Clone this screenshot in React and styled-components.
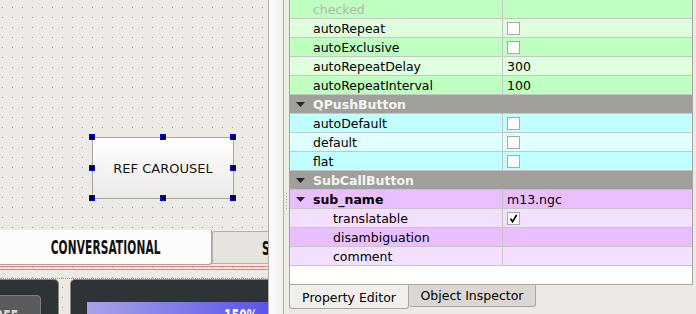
import React from 'react';
import styled, { createGlobalStyle } from 'styled-components';

const Global = createGlobalStyle`
  html, body { margin: 0; padding: 0; background: #edeae6; }
  body { font-family: "DejaVu Sans", "Noto Sans", sans-serif; font-size: 12.5px; color: #000; }
  * { box-sizing: border-box; }
`;

const dotSvg = encodeURIComponent(
  "<svg xmlns='http://www.w3.org/2000/svg' width='10' height='10'><rect x='2' y='7' width='1' height='1' fill='#9f9c98'/></svg>"
);

const Window = styled.div`
  display: flex;
  width: 696px;
  height: 314px;
  overflow: hidden;
  background: #edeae6;
`;

/* ---------- left: designer form ---------- */
const FormArea = styled.div`
  width: 269px;
  flex: none;
  border-right: 1px solid #b3afaa;
  display: flex;
  flex-direction: column;
  background-color: #edeae6;
  background-image: url("data:image/svg+xml,${dotSvg}");
  overflow: hidden;
`;

const Canvas = styled.div`
  position: relative;
  height: 230px;
  flex: none;
`;

const SelectedButton = styled.div`
  position: absolute;
  left: 92px;
  top: 137px;
  width: 142px;
  height: 62px;
  border: 1px solid #a9a6a2;
  background: linear-gradient(#ffffff, #ebe9e6);
  display: flex;
  align-items: center;
  justify-content: center;
  font-size: 13px;
  color: #151515;
`;

const Handle = styled.span`
  position: absolute;
  width: 6px;
  height: 6px;
  background: #000;
  border: 1px solid #0000ff;
  left: ${(p) => p.$x};
  top: ${(p) => p.$y};
`;

const TabBar = styled.div`
  display: flex;
  height: 35px;
  flex: none;
  align-items: flex-start;
`;

const FormTab = styled.div`
  display: flex;
  align-items: center;
  overflow: hidden;
  ${(p) =>
    p.$active
      ? `width: 212px; height: 35px; justify-content: center; background: #fdfcfb;
         border-right: 1px solid #aaa6a1; border-bottom: 1px solid #aaa6a1; border-bottom-right-radius: 3px;`
      : `flex: 1; height: 33px; margin-top: 1px; padding-left: 49px; background: #e7e4e0;
         border: 1px solid #b3afaa; border-right: none; border-top-left-radius: 3px;`}
`;

const Condensed = styled.span`
  display: inline-block;
  font-family: "DejaVu Sans Condensed", "DejaVu Sans", sans-serif;
  font-weight: bold;
  font-size: ${(p) => p.$size || 19}px;
  color: ${(p) => p.$color || '#111'};
  transform: scaleX(${(p) => p.$sx || 0.62});
  transform-origin: ${(p) => p.$origin || 'center'};
  white-space: nowrap;
  letter-spacing: 0.2px;
`;

const RedRule = styled.div`
  flex: none;
  margin-top: 1px;
  height: 4px;
  border-top: 1px solid #ef7b7b;
  border-bottom: 1px solid #ef7b7b;
`;

const DarkRow = styled.div`
  flex: 1;
  margin-top: 8px;
  display: flex;
  gap: 11px;
  border-top: 1px dotted #9a9794;
`;

const DarkPanel = styled.div`
  background: #2e3436;
  border: 1px solid #8d8b88;
  border-bottom: none;
  display: flex;
  align-items: flex-start;
  overflow: hidden;
  ${(p) =>
    p.$first
      ? `width: 59px; flex: none; border-left: none; border-top-right-radius: 5px; padding-top: 15px;`
      : `flex: 1; border-right: none; border-top-left-radius: 5px; padding: 22px 0 0 16px;`}
`;

const RefButton = styled.div`
  flex: none;
  width: 68px;
  height: 40px;
  margin-left: -27px;
  background: #5a5b5b;
  border: 1px solid #7d7d7d;
  border-radius: 4px;
  display: flex;
  justify-content: center;
  padding-top: 10px;
`;

const ScaleBar = styled.div`
  flex: 1;
  height: 40px;
  background: linear-gradient(90deg, #a6a3e8, #5a54ea);
  display: flex;
  justify-content: flex-end;
  padding: 3px 10px 0 0;
`;

/* ---------- splitter ---------- */
const Splitter = styled.div`
  width: 14px;
  flex: none;
  background: linear-gradient(90deg, #fbfbfa, #f0eeeb);
`;

/* ---------- right: property editor ---------- */
const SidePanel = styled.div`
  position: relative;
  width: 413px;
  flex: none;
  border-left: 1px solid #b3afaa;
  display: flex;
  flex-direction: column;
  padding-left: 5px;
`;

const Grip = styled.div`
  position: absolute;
  left: 2px;
  top: 193px;
  width: 1px;
  height: 18px;
  background: repeating-linear-gradient(#a8a5a1 0 1px, transparent 1px 3px);
`;

const PropTable = styled.div`
  width: 404px;
  height: 285px;
  flex: none;
  background: #fff;
  border: 1px solid #a9a5a0;
  border-top: none;
  display: flex;
  flex-direction: column;
`;

const palette = {
  green: ['#bfffbf', '#dfffdf'],
  cyan: ['#c1ffff', '#e0ffff'],
  purple: ['#eabfff', '#f4dfff'],
};

const Row = styled.div`
  display: flex;
  height: 19px;
  flex: none;
  border-bottom: 1px solid #c6c6c6;
  background: ${(p) => p.$bg};
`;

const NameCell = styled.div`
  width: 213px;
  flex: none;
  display: flex;
  align-items: center;
  padding-top: 1px;
  padding-left: ${(p) => 6 + (p.$level === 2 ? 20 : 0)}px;
  border-right: ${(p) => (p.$header ? 'none' : '1px solid #c6c6c6')};
  white-space: nowrap;
  color: ${(p) => (p.$header ? '#f5f5f5' : p.$disabled ? '#b3b3b3' : '#000')};
  font-weight: ${(p) => (p.$bold ? 'bold' : 'normal')};
`;

const ArrowSlot = styled.span`
  width: 17px;
  flex: none;
  display: flex;
  align-items: center;
  margin-top: -1px;
`;

const ValueCell = styled.div`
  flex: 1;
  display: flex;
  align-items: center;
  padding-left: 4px;
  padding-top: 1px;
  white-space: nowrap;
`;

const CheckBox = styled.span`
  width: 13px;
  height: 13px;
  margin-top: -1px;
  background: #fff;
  border: 1px solid #aaa8a5;
  display: flex;
  align-items: center;
  justify-content: center;
`;

const DockTabs = styled.div`
  display: flex;
  align-items: flex-start;
  height: 29px;
  flex: none;
`;

const DockTab = styled.div`
  display: flex;
  align-items: center;
  justify-content: center;
  border: 1px solid #aaa6a1;
  border-top: none;
  border-radius: 0 0 3px 3px;
  white-space: nowrap;
  ${(p) =>
    p.$active
      ? `width: 120px; height: 24px; background: #f1efec; padding-top: 1px;`
      : `width: 127px; height: 22px; background: #dbd8d3; border-left: none; padding-bottom: 1px;`}
`;

const Arrow = () => (
  <svg width="9" height="5" viewBox="0 0 9 5">
    <path d="M0 0 L9 0 L4.5 5 Z" fill="#262626" />
  </svg>
);

const Tick = () => (
  <svg width="9" height="9" viewBox="0 0 9 9">
    <path d="M1.5 4.8 L3.6 7.6 L7.6 1" fill="none" stroke="#000" strokeWidth="1.8" />
  </svg>
);

const rows = [
  { group: 'green', shade: 0, name: 'checked', disabled: true },
  { group: 'green', shade: 1, name: 'autoRepeat', check: false },
  { group: 'green', shade: 0, name: 'autoExclusive', check: false },
  { group: 'green', shade: 1, name: 'autoRepeatDelay', value: '300' },
  { group: 'green', shade: 0, name: 'autoRepeatInterval', value: '100' },
  { header: true, name: 'QPushButton' },
  { group: 'cyan', shade: 0, name: 'autoDefault', check: false },
  { group: 'cyan', shade: 1, name: 'default', check: false },
  { group: 'cyan', shade: 0, name: 'flat', check: false },
  { header: true, name: 'SubCallButton' },
  { group: 'purple', shade: 0, name: 'sub_name', bold: true, expand: true, value: 'm13.ngc' },
  { group: 'purple', shade: 1, name: 'translatable', level: 2, check: true },
  { group: 'purple', shade: 0, name: 'disambiguation', level: 2 },
  { group: 'purple', shade: 1, name: 'comment', level: 2 },
];

const handles = [
  ['-4px', '-4px'], ['67px', '-4px'], ['137px', '-4px'],
  ['-4px', '27px'], ['137px', '27px'],
  ['-4px', '57px'], ['67px', '57px'], ['137px', '57px'],
];

export default function App() {
  return (
    <>
      <Global />
      <Window>
        <FormArea>
          <Canvas>
            <SelectedButton>
              REF CAROUSEL
              {handles.map(([x, y], i) => (
                <Handle key={i} $x={x} $y={y} />
              ))}
            </SelectedButton>
          </Canvas>
          <TabBar>
            <FormTab $active>
              <Condensed>CONVERSATIONAL</Condensed>
            </FormTab>
            <FormTab>
              <Condensed $origin="left">SETUP</Condensed>
            </FormTab>
          </TabBar>
          <RedRule />
          <DarkRow>
            <DarkPanel $first>
              <RefButton>
                <Condensed $size={19} $color="#d6d6d6">REF</Condensed>
              </RefButton>
            </DarkPanel>
            <DarkPanel>
              <ScaleBar>
                <Condensed $size={19} $color="#ffffff" $origin="right">150%</Condensed>
              </ScaleBar>
            </DarkPanel>
          </DarkRow>
        </FormArea>
        <Splitter />
        <SidePanel>
          <Grip />
          <PropTable>
            {rows.map((r, i) => {
              if (r.header) {
                return (
                  <Row key={i} $bg="#a19f9b">
                    <NameCell $header $bold>
                      <ArrowSlot><Arrow /></ArrowSlot>
                      {r.name}
                    </NameCell>
                  </Row>
                );
              }
              return (
                <Row key={i} $bg={palette[r.group][r.shade]}>
                  <NameCell $level={r.level} $bold={r.bold} $disabled={r.disabled}>
                    <ArrowSlot>{r.expand && <Arrow />}</ArrowSlot>
                    {r.name}
                  </NameCell>
                  <ValueCell>
                    {r.check !== undefined ? (
                      <CheckBox>{r.check && <Tick />}</CheckBox>
                    ) : (
                      r.value
                    )}
                  </ValueCell>
                </Row>
              );
            })}
          </PropTable>
          <DockTabs>
            <DockTab $active>Property Editor</DockTab>
            <DockTab>Object Inspector</DockTab>
          </DockTabs>
        </SidePanel>
      </Window>
    </>
  );
}
